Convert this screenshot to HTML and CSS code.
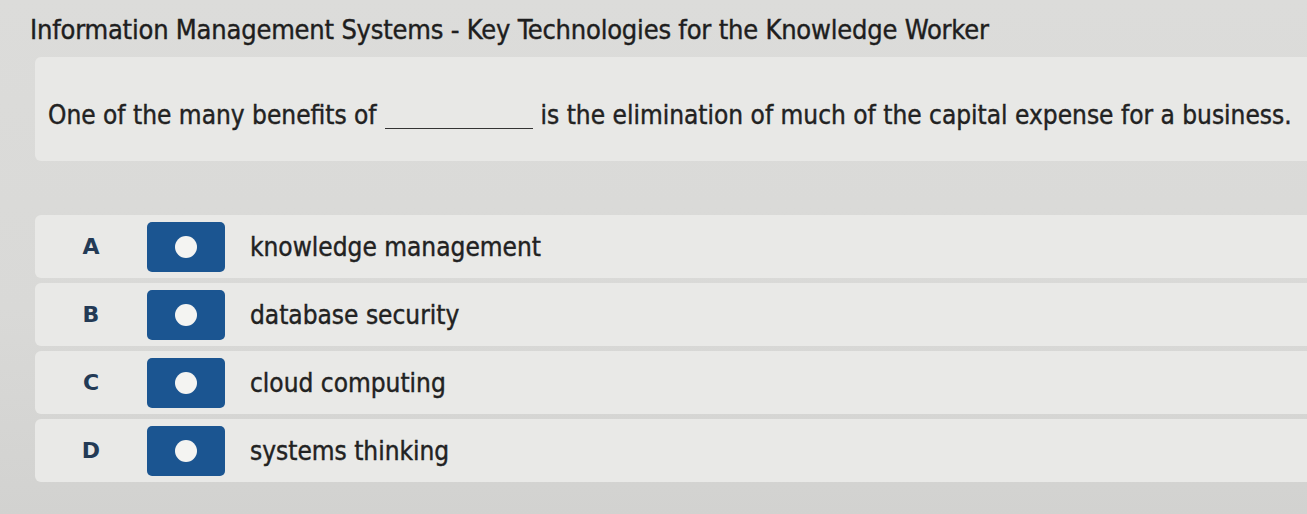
FILE: index.html
```html
<!DOCTYPE html>
<html>
<head>
<meta charset="utf-8">
<link rel="stylesheet" href="styles.css">
</head>
<body>
<div class="page">
  <h1 class="title">Information Management Systems - Key Technologies for the Knowledge Worker</h1>
  <div class="question">
    <span class="q-text">One of the many benefits of</span>
    <span class="blank"></span>
    <span class="q-text">is the elimination of much of the capital expense for a business.</span>
  </div>
  <div class="options">
    <div class="option">
      <span class="letter">A</span>
      <span class="radio"><span class="dot"></span></span>
      <span class="label">knowledge management</span>
    </div>
    <div class="option">
      <span class="letter">B</span>
      <span class="radio"><span class="dot"></span></span>
      <span class="label">database security</span>
    </div>
    <div class="option">
      <span class="letter">C</span>
      <span class="radio"><span class="dot"></span></span>
      <span class="label">cloud computing</span>
    </div>
    <div class="option">
      <span class="letter">D</span>
      <span class="radio"><span class="dot"></span></span>
      <span class="label">systems thinking</span>
    </div>
  </div>
</div>
</body>
</html>
```
FILE: styles.css
```css
html, body {
  margin: 0;
  padding: 0;
}
body {
  width: 1307px;
  height: 514px;
  overflow: hidden;
  background: linear-gradient(180deg, #dcdcda 0%, #d9d9d7 60%, #d2d2d0 100%);
  font-family: "DejaVu Sans Condensed", "DejaVu Sans", sans-serif;
  color: #222;
}
.page {
  display: flex;
  flex-direction: column;
  padding: 13px 0 0 30px;
}
.title {
  margin: 0;
  font-size: 27px;
  font-weight: normal;
  color: #1e1e1e;
  line-height: 34px;
  letter-spacing: -0.2px;
  -webkit-text-stroke: 0.4px #1e1e1e;
}
.question {
  margin: 10px 0 0 5px;
  height: 104px;
  background: #e8e8e6;
  border-radius: 6px 0 0 6px;
  display: flex;
  align-items: center;
  padding: 12px 0 0 13px;
  box-sizing: border-box;
  gap: 8px;
  font-size: 26px;
  color: #222;
  -webkit-text-stroke: 0.4px #222;
}
.blank {
  display: inline-block;
  width: 148px;
  height: 26px;
  border-bottom: 1.5px solid #333;
  -webkit-text-stroke: 0;
}
.options {
  margin: 54px 0 0 5px;
  display: flex;
  flex-direction: column;
  gap: 5px;
}
.option {
  height: 63px;
  background: #e9e9e7;
  border-radius: 6px 0 0 6px;
  display: flex;
  align-items: center;
}
.letter {
  width: 112px;
  text-align: center;
  font-family: "DejaVu Sans", sans-serif;
  font-weight: bold;
  font-size: 22px;
  color: #233a55;
}
.radio {
  width: 78px;
  height: 50px;
  background: #1b5591;
  border-radius: 5px;
  display: flex;
  align-items: center;
  justify-content: center;
}
.dot {
  width: 22px;
  height: 22px;
  border-radius: 50%;
  background: #f4f4f2;
}
.label {
  margin-left: 25px;
  font-size: 26px;
  color: #222;
  -webkit-text-stroke: 0.4px #222;
}
```
